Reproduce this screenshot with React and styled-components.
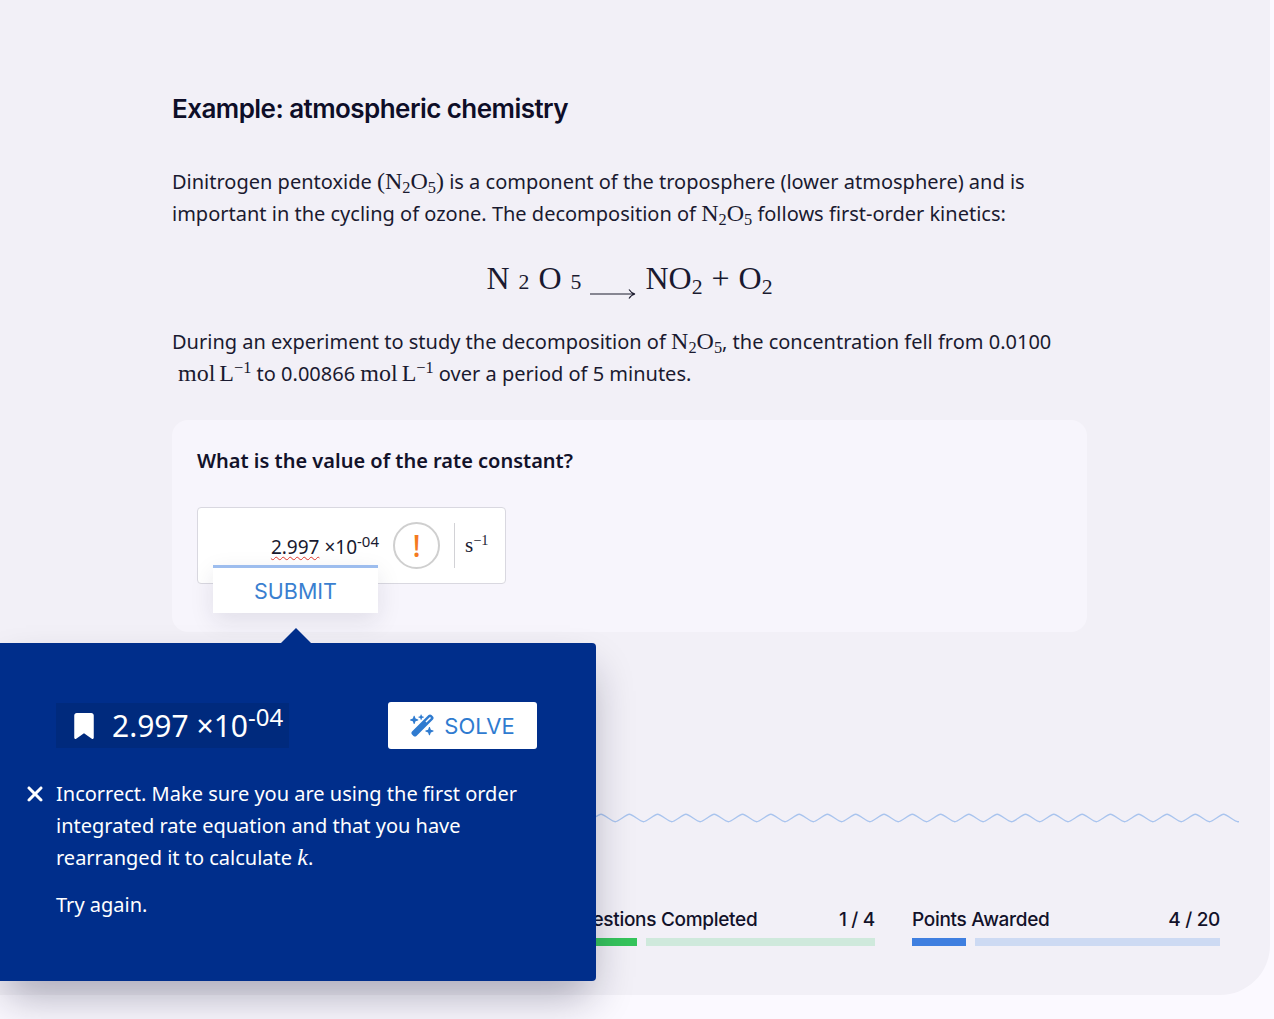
import React from "react";
import styled, { createGlobalStyle } from "styled-components";
import { FaBookmark, FaWandMagicSparkles, FaXmark } from "react-icons/fa6";

const WAVE_START = 28;
const WAVE_PERIOD = 28.3;

function wavePath() {
  let d = `M0 6`;
  for (let i = 0; i < 43; i++) {
    const x = i * WAVE_PERIOD;
    d += ` C${x + 7} 0 ${x + 7} 0 ${x + 14.15} 5 S${x + 21} 10 ${x + 28.3} 5`;
  }
  return d;
}

function Frac({ base, sub }) {
  return (
    <>
      {base}
      <Sub>{sub}</Sub>
    </>
  );
}

function N2O5() {
  return (
    <>
      <Frac base="N" sub="2" />
      <Frac base="O" sub="5" />
    </>
  );
}

function Unit() {
  return (
    <Mathy>
      mol<Thin />L<Sup>−1</Sup>
    </Mathy>
  );
}

function App() {
  return (
    <Page>
      <GlobalStyle />
      <Panel>
        <Content>
          <Title>Example: atmospheric chemistry</Title>
          <Para>
            Dinitrogen pentoxide <Mathy>(<N2O5 />)</Mathy> is a component of the troposphere (lower atmosphere) and is
            important in the cycling of ozone. The decomposition of <Mathy><N2O5 /></Mathy> follows first-order kinetics:
          </Para>
          <Equation>
            <N2O5 />
            <svg width="46" height="14" viewBox="0 0 46 14">
              <path d="M0 7H45M39 2.5C40.5 5 42 6.3 45 7C42 7.7 40.5 9 39 11.5" fill="none" stroke="#1c1c2e" strokeWidth="1.1" />
            </svg>
            <span>
              NO<Sub>2</Sub>
            </span>
            <span>+</span>
            <span>
              O<Sub>2</Sub>
            </span>
          </Equation>
          <Para>
            During an experiment to study the decomposition of <Mathy><N2O5 /></Mathy>, the concentration fell from 0.0100
            <br />
            <UnitGap /><Unit /> to 0.00866 <Unit /> over a period of 5 minutes.
          </Para>
          <Card>
            <Question>What is the value of the rate constant?</Question>
            <InputBox>
              <Value>
                <Wavy>2.997</Wavy> ×10<ValueSup>-04</ValueSup>
              </Value>
              <Alert>
                <AlertMark>!</AlertMark>
              </Alert>
              <Divider />
              <Units>
                s<Sup>−1</Sup>
              </Units>
              <SubmitButton>SUBMIT</SubmitButton>
            </InputBox>
          </Card>
        </Content>

        <Wave viewBox="0 0 1211 12" width="1211" height="12">
          <path d={wavePath()} fill="none" stroke="#a9c4ee" strokeWidth="1.3" />
        </Wave>

        <Stats>
          <Stat>
            <StatHead>
              <span>Questions Completed</span>
              <span>1 / 4</span>
            </StatHead>
            <Bars>
              <BarFill $color="#35c45c" $width={70} />
              <BarTrack $color="#cfe9dc" />
            </Bars>
          </Stat>
          <Stat>
            <StatHead>
              <span>Points Awarded</span>
              <span>4 / 20</span>
            </StatHead>
            <Bars>
              <BarFill $color="#3f7fe0" $width={54} />
              <BarTrack $color="#cddaf3" />
            </Bars>
          </Stat>
        </Stats>
      </Panel>

      <Popover>
        <PopTop>
          <Answer>
            <FaBookmark size={26} />
            <span>
              2.997 ×10<AnswerSup>-04</AnswerSup>
            </span>
          </Answer>
          <SolveButton>
            <FaWandMagicSparkles size={25} />
            SOLVE
          </SolveButton>
        </PopTop>
        <Feedback>
          <CrossIcon>
            <FaXmark size={24} />
          </CrossIcon>
          <div>
            <FeedbackText>
              Incorrect. Make sure you are using the first order integrated rate equation and that you have rearranged it
              to calculate <MathK>k</MathK>.
            </FeedbackText>
            <TryAgain>Try again.</TryAgain>
          </div>
        </Feedback>
      </Popover>
    </Page>
  );
}

export default App;

const GlobalStyle = createGlobalStyle`
  html, body {
    margin: 0;
    padding: 0;
    background: #fbf9ff;
  }
  * {
    box-sizing: border-box;
  }
`;

const Page = styled.div`
  position: relative;
  width: 1274px;
  height: 1019px;
  overflow: hidden;
  background: #fbf9ff;
  color: #12122a;
  font-family: "Noto Sans", sans-serif;
`;
const Panel = styled.main`
  width: 1270px;
  height: 995px;
  padding-top: 93px;
  background: #f2f0f7;
  border-bottom-right-radius: 50px;
`;
const Content = styled.div`
  width: 915px;
  margin-left: 172px;
`;
const Title = styled.h1`
  margin: 0 0 41px;
  font-family: Inter, sans-serif;
  font-size: 26px;
  font-weight: 600;
  letter-spacing: -0.55px;
  line-height: 32px;
  color: #0e0e28;
`;
const Para = styled.p`
  margin: 0;
  font-size: 20px;
  line-height: 32px;
  color: #1a1a30;
`;
const Mathy = styled.span`
  font-family: "Liberation Serif", serif;
  font-size: 24px;
  line-height: 0;
`;
const Sub = styled.sub`
  font-size: 0.68em;
  line-height: 0;
  vertical-align: -0.22em;
`;
const Sup = styled.sup`
  font-size: 0.68em;
  line-height: 0;
  vertical-align: 0.5em;
`;
const Thin = styled.span`
  display: inline-block;
  width: 4px;
`;
const UnitGap = styled.span`
  display: inline-block;
  width: 6px;
`;
const Equation = styled.div`
  display: flex;
  justify-content: center;
  align-items: baseline;
  gap: 9px;
  height: 96px;
  padding-top: 29px;
  font-family: "Liberation Serif", serif;
  font-size: 32px;
  line-height: 38px;
  color: #1a1a30;
  svg {
    align-self: center;
    margin-top: 2px;
  }
`;
const Card = styled.section`
  height: 212px;
  margin-top: 30px;
  padding: 25px;
  background: #f7f5fc;
  border-radius: 16px;
`;
const Question = styled.h2`
  margin: 0 0 30px;
  font-size: 20px;
  font-weight: 600;
  line-height: 32px;
  color: #12122a;
`;
const InputBox = styled.div`
  position: relative;
  display: flex;
  align-items: center;
  width: 309px;
  height: 77px;
  padding: 0 11px 0 16px;
  background: #fff;
  border: 1px solid #d9d8e0;
  border-radius: 4px;
`;
const Value = styled.div`
  width: 165px;
  padding-top: 2px;
  font-size: 19px;
  line-height: 32px;
  text-align: right;
  white-space: nowrap;
  color: #1a1a30;
`;
const Wavy = styled.span`
  text-decoration: underline wavy #e0352b 1px;
  text-underline-offset: 2px;
`;
const ValueSup = styled.sup`
  font-size: 15px;
  line-height: 0;
`;
const Alert = styled.div`
  display: flex;
  align-items: center;
  justify-content: center;
  width: 47px;
  height: 47px;
  margin-left: 14px;
  border: 2px solid #cfcfcf;
  border-radius: 50%;
`;
const AlertMark = styled.span`
  font-size: 30px;
  font-weight: 500;
  line-height: 1;
  color: #f47a1f;
`;
const Divider = styled.div`
  width: 1px;
  height: 45px;
  margin-left: 14px;
  background: #d2d2d6;
`;
const Units = styled.div`
  margin-left: 10px;
  font-family: "Liberation Serif", serif;
  font-size: 21px;
  color: #1a1a30;
`;
const SubmitButton = styled.button`
  position: absolute;
  left: 15px;
  top: 57px;
  width: 165px;
  height: 48px;
  padding: 0;
  background: #fff;
  border: 0;
  border-top: 3px solid #9dbdee;
  box-shadow: 0 8px 24px rgba(30, 30, 60, 0.1);
  font-family: Inter, sans-serif;
  font-size: 21.5px;
  color: #3a7fd0;
`;
const Wave = styled.svg`
  display: block;
  margin: 181px 0 0 ${WAVE_START}px;
`;
const Stats = styled.footer`
  display: flex;
  justify-content: flex-end;
  gap: 37px;
  margin-top: 83px;
  padding-right: 50px;
`;
const Stat = styled.div`
  width: 308px;
`;
const StatHead = styled.div`
  display: flex;
  justify-content: space-between;
  font-family: Inter, sans-serif;
  font-size: 19px;
  font-weight: 500;
  letter-spacing: -0.3px;
  line-height: 24px;
  color: #12122a;
`;
const Bars = styled.div`
  display: flex;
  gap: 9px;
  height: 8px;
  margin-top: 6px;
`;
const BarFill = styled.div`
  width: ${(p) => p.$width}px;
  background: ${(p) => p.$color};
`;
const BarTrack = styled.div`
  flex: 1;
  background: ${(p) => p.$color};
`;
const Popover = styled.aside`
  position: absolute;
  left: 0;
  top: 643px;
  width: 596px;
  height: 338px;
  padding: 59px 59px 0 56px;
  background: #002e8b;
  border-radius: 0 4px 4px 0;
  box-shadow: 0 22px 40px -6px rgba(20, 20, 50, 0.32);
  color: #fff;
  &::before {
    content: "";
    position: absolute;
    left: 281px;
    top: -15px;
    border-left: 15px solid transparent;
    border-right: 15px solid transparent;
    border-bottom: 15px solid #002e8b;
  }
`;
const PopTop = styled.div`
  display: flex;
  justify-content: space-between;
  align-items: center;
`;
const Answer = styled.div`
  display: flex;
  align-items: center;
  gap: 15px;
  width: 233px;
  height: 45px;
  padding-left: 15px;
  background: #002a7d;
  font-size: 30px;
  white-space: nowrap;
`;
const AnswerSup = styled.sup`
  font-size: 24px;
  line-height: 0;
`;
const SolveButton = styled.button`
  display: flex;
  align-items: center;
  justify-content: center;
  gap: 9px;
  width: 149px;
  height: 47px;
  padding: 0;
  background: #fff;
  border: 0;
  border-radius: 3px;
  font-family: Inter, sans-serif;
  font-size: 22px;
  color: #2f7bd0;
`;
const Feedback = styled.div`
  position: relative;
  margin-top: 29px;
  font-size: 20px;
  line-height: 32px;
`;
const CrossIcon = styled.span`
  position: absolute;
  left: -33px;
  top: 4px;
  display: flex;
`;
const FeedbackText = styled.p`
  margin: 0;
`;
const MathK = styled.i`
  font-family: "Liberation Serif", serif;
  font-size: 24px;
  line-height: 0;
`;
const TryAgain = styled.p`
  margin: 15px 0 0;
`;
